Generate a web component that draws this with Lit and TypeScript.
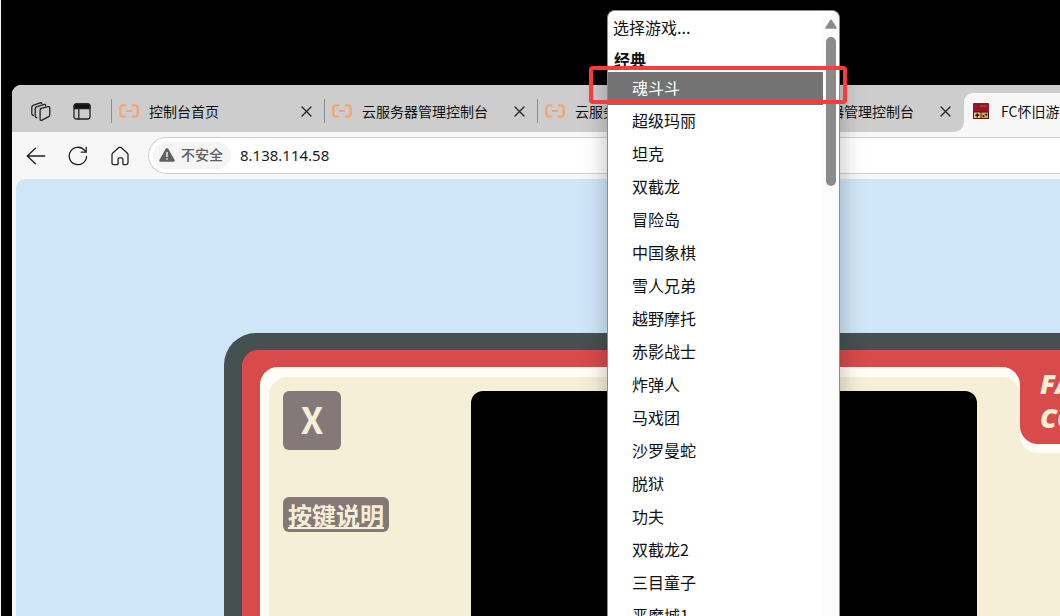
import { LitElement, html, css, svg, nothing } from "lit";
import { customElement, property, state } from "lit/decorators.js";

const cloudIcon = html`<svg width="20" height="14" viewBox="0 0 20 14" fill="none" stroke="#f2a671" aria-hidden="true">
  <path d="M7.2 1.3H4.2C2.4 1.3 1.3 2.5 1.3 4.2v5.6c0 1.700 1.100 2.900 2.900 2.900h3M12.800 1.300h3c1.800 0 2.900 1.200 2.900 2.900v5.600c0 1.700-1.100 2.900-2.900 2.900h-3" stroke-width="2.300" />
  <path d="M6.800 7h6.400" stroke-width="2" />
</svg>`;

const consoleIcon = html`<svg width="16" height="16" viewBox="0 0 16 16" aria-hidden="true">
  <rect width="16" height="16" rx="1" fill="#9a1626" />
  <path d="M7 2.600h7v1.200H7z" fill="#b5404a" />
  <path d="M0 8.500h16V15a1 1 0 0 1-1 1H1a1 1 0 0 1-1-1z" fill="#4a1512" />
  <rect x="1" y="9.500" width="6.500" height="5.500" fill="#f0c66e" />
  <rect x="8.500" y="9.500" width="6.500" height="5.500" fill="#d9a65a" />
  <path d="M3.600 10.200h1.400v1.400h1.300V13H5v1.400H3.600V13H2.300v-1.400h1.300z" fill="#2a0d0b" />
  <circle cx="10.500" cy="13" r="1.100" fill="#2a0d0b" />
  <circle cx="13.300" cy="11.600" r="1.100" fill="#2a0d0b" />
</svg>`;

const stroked = (w: number, h: number, shapes: unknown) => html`<svg
  width=${w} height=${h} viewBox="0 0 ${w} ${h}" fill="none" stroke="#222" stroke-width="1.300"
  stroke-linecap="round" stroke-linejoin="round" aria-hidden="true">${shapes}</svg>`;

const workspacesIcon = stroked(20, 20, svg`
  <path d="M9.200 6.600l7.700-1.900q1.900-.4 1.900 1.500v6.600q0 1.300-1.100 1.900l-6.600 3.400q-2 .9-2-1.100V8.500q0-1.500 1.100-1.900z" />
  <path d="M5.800 15.700l-.7-.1q-.9-.3-.9-1.500V6.800q0-1.500 1.300-2l7.600-2.400q1.200-.3 1.500.8v.6" />
  <path d="M2.400 13.500q-1.600-.3-1.600-1.900V5.200q0-1.400 1.300-1.900l7-2.400q1.300-.4 1.700.5" />`);
const verticalTabsIcon = stroked(18, 17, svg`
  <rect x="1" y="1" width="16" height="15" rx="2.500" />
  <path d="M1.200 4V3q0-2 2-2h11.600q2 0 2 2v2.500H1.200z" fill="#111" />
  <path d="M5.800 5.500V16" />`);
const backIcon = stroked(20, 18, svg`<path d="M9.500 1.200L1.200 9l8.300 7.800M1.200 9h17.600" />`);
const reloadIcon = stroked(20, 20, svg`<path d="M18.600 10.500A8.700 8.700 0 1 1 16.600 4.400L18.200 6.200M18.200 1.200v5h-5" />`);
const homeIcon = stroked(18, 20, svg`
  <path d="M1 8.600q0-1 .8-1.700l6-5.300q1.200-1 2.400 0l6 5.300q.8.700.8 1.700v8.200q0 1.800-1.700 1.800h-2.200q-1.200 0-1.200-1.200v-4.200q0-1.400-1.400-1.400H8.500q-1.400 0-1.400 1.400v4.200q0 1.200-1.200 1.200H2.700Q1 18.600 1 16.800z" />`);
const closeIcon = stroked(11, 11, svg`<path d="M1 1l9 9M10 1l-9 9" />`);
const warningIcon = html`<svg width="16" height="14" viewBox="0 0 16 14" aria-hidden="true">
  <path d="M6.800.8q1.200-1.400 2.400 0l6.300 11q.8 1.700-1 2H1.500q-1.800-.3-1-2z" fill="#606060" />
  <path d="M7.300 4h1.400v5H7.300zM7.300 10.300h1.400v1.400H7.300z" fill="#f5f5f5" />
</svg>`;

@customElement("browser-tab")
class BrowserTab extends LitElement {
  @property() label = "";
  @property() kind = "cloud";
  @property({ type: Boolean, reflect: true }) active = false;

  static styles = css`
    :host { flex: none; display: block; height: 47px; box-sizing: border-box; padding-top: 8px; }
    .tab {
      position: relative; display: flex; align-items: center; box-sizing: border-box;
      width: 213px; height: 39px; padding: 0 13px 3px 7px; gap: 10px;
    }
    .tab::before { content: ""; flex: none; width: 1px; height: 24px; margin-left: -8px; margin-right: -3px; background: #8c8c8c; }
    :host([active]) .tab { padding-left: 9px; background: #f7f7f7; border-radius: 9px 9px 0 0; gap: 12px; }
    :host([active]) .tab::before {
      position: absolute; left: -9px; bottom: 0; width: 9px; height: 9px; margin: 0;
      background: radial-gradient(circle at 0 0, transparent 8px, #f7f7f7 9px);
    }
    .label { flex: 1; white-space: nowrap; overflow: hidden; }
    .close { display: flex; padding: 0; border: 0; background: none; }
    svg { flex: none; display: block; }
  `;

  render() {
    return html`<div class="tab" role="tab" aria-selected=${this.active}>
      ${this.kind === "console" ? consoleIcon : cloudIcon}
      <span class="label">${this.label}</span>
      ${this.active ? nothing : html`<button class="close" aria-label="关闭">${closeIcon}</button>`}
    </div>`;
  }
}

@customElement("browser-toolbar")
class BrowserToolbar extends LitElement {
  static styles = css`
    :host { flex: none; display: flex; align-items: center; height: 47px; background: #f7f7f7; padding-left: 14px; }
    .tool { display: flex; justify-content: center; width: 20px; margin-right: 22px; padding: 0; border: 0; background: none; }
    .address {
      flex: 1; display: flex; align-items: center; gap: 9px; box-sizing: border-box; height: 37px;
      padding-left: 4px; margin-left: -4px; border: 1px solid #d2d0ce; border-right: 0;
      border-radius: 19px 0 0 19px; background: #fff;
    }
    .security {
      display: flex; align-items: center; gap: 6px; height: 27px; padding: 0 8px 2px 6px; border: 0;
      border-radius: 14px; background: #f5f5f5; color: #606060; font: 500 14px/25px "Noto Sans CJK SC", sans-serif;
    }
    .url { flex: 1; min-width: 0; padding: 0; border: 0; outline: 0; background: none; color: #1b1b1b; font: 15px/23px "Noto Sans", sans-serif; }
  `;

  render() {
    return html`
      <button class="tool" aria-label="后退">${backIcon}</button>
      <button class="tool" aria-label="刷新">${reloadIcon}</button>
      <button class="tool" aria-label="主页">${homeIcon}</button>
      <div class="address">
        <button class="security">${warningIcon}不安全</button>
        <input class="url" aria-label="地址" value="8.138.114.58" />
      </div>`;
  }
}

@customElement("game-console")
class GameConsole extends LitElement {
  static styles = css`
    :host { display: flex; flex: 1; min-height: 0; }
    .shell {
      flex: 1; display: flex; box-sizing: border-box; min-width: 0; padding: 17px 0 0 18px;
      background: #475050; border-radius: 32px 0 0 0;
    }
    .body { flex: 1; display: flex; min-width: 0; padding: 17px 0 0 18px; background: #d94a4a; border-radius: 16px 0 0 0; }
    .face {
      flex: 1; display: flex; justify-content: space-between; min-width: 0; padding: 24px 43px 0 23px;
      background: #fffdf5; border-radius: 18px 18px 0 0; position: relative; isolation: isolate;
      overflow: hidden;
    }
    .face::before {
      content: ""; position: absolute; z-index: -1; inset: 10px 0 0 9px;
      background: #f6efd8; border-radius: 18px 18px 0 0;
    }
    .keys { flex: none; width: 188px; display: flex; flex-direction: column; align-items: flex-start; gap: 47px; }
    .key, .help { background: #857878; color: #f6efd8; border: 0; border-radius: 6px; }
    .key { width: 58px; height: 59px; padding: 0 0 4px; font: 700 36px/55px "Noto Sans CJK SC", sans-serif; }
    .help { padding: 0 5px; font: 700 24px/35px "Noto Sans CJK SC", sans-serif; text-underline-offset: 2px; }
    .screen { flex: 1; background: #000; border-radius: 12px 12px 0 0; }
    .side { flex: none; width: 40px; background: #f6efd8; }
    .badge {
      height: 77px; padding-left: 20px; background: #d94a4a; border-radius: 0 0 0 18px; box-shadow: 0 9px 0 #fffdf5;
      color: #f6efd8; font: italic 800 27px/34px "Open Sans", sans-serif; overflow: hidden;
    }
  `;

  render() {
    return html`<div class="shell"><div class="body">
      <main class="face">
        <div class="keys">
          <button class="key">X</button>
          <a class="help" href="#keys">按键说明</a>
        </div>
        <div class="screen"></div>
      </main>
      <aside class="side"><div class="badge">FAMILY<br />COMPUTER</div></aside>
    </div></div>`;
  }
}

@customElement("game-picker")
class GamePicker extends LitElement {
  @state() private chosen = "魂斗斗";

  private games = [
    "魂斗斗", "超级玛丽", "坦克", "双截龙", "冒险岛", "中国象棋", "雪人兄弟", "越野摩托", "赤影战士",
    "炸弹人", "马戏团", "沙罗曼蛇", "脱狱", "功夫", "双截龙2", "三目童子", "恶魔城1",
  ];

  static styles = css`
    :host {
      display: flex; box-sizing: border-box; overflow: hidden; background: #fff;
      border: 1px solid #8c8c8c; border-bottom: 0; border-radius: 8px 8px 0 0;
      box-shadow: 0 6px 24px rgba(0, 0, 0, 0.28);
    }
    .list {
      appearance: none; flex: 1; min-width: 0; height: 100%; margin: 0; padding: 0; border: 0; outline: 0; border-radius: 0;
      overflow: hidden; background: #fff; color: #111; font: 16px/24px "Noto Sans CJK SC", sans-serif;
    }
    .hint, .game { box-sizing: border-box; height: 33px; min-height: 33px; padding: 4px 0 0 5px; }
    .group { padding: 3px 0 0 4px; margin: 0; font-weight: 700; }
    .game { padding: 3px 0 0 24px; margin-left: -4px; font-weight: 400; }
    .game::before { content: none; }
    .game:checked { color: #fff; background: #737373 linear-gradient(#737373, #737373); }
    .bar { flex: none; display: flex; flex-direction: column; align-items: center; gap: 8px; width: 16px; padding-top: 8px; background: #fcfcfc; }
    .up { width: 12px; height: 10px; display: block; }
    .thumb { width: 10px; height: 149px; border-radius: 5px; background: #8b8b8b; }
  `;

  private pick(e: Event) {
    this.chosen = (e.target as HTMLSelectElement).value;
  }

  render() {
    return html`
      <select class="list" size="18" aria-label="选择游戏" @change=${this.pick}>
        <option class="hint" value="">选择游戏...</option>
        <optgroup class="group" label="经典">
          ${this.games.map((g) => html`<option class="game" value=${g} ?selected=${g === this.chosen}>${g}</option>`)}
        </optgroup>
      </select>
      <div class="bar" aria-hidden="true">
        <svg class="up" viewBox="0 0 12 10"><path d="M6 1.200L11 9H1z" fill="#8b8b8b" stroke="#8b8b8b" stroke-width="1.500" stroke-linejoin="round" /></svg>
        <div class="thumb"></div>
      </div>`;
  }
}

@customElement("app-root")
class AppRoot extends LitElement {
  static styles = css`
    :host {
      position: relative; display: flex; flex-direction: column; box-sizing: border-box; height: 100vh;
      overflow: hidden; padding: 85px 0 0 11px; background: #000; border-left: 1px solid #f4f4f4;
      font: 14px/20px "Noto Sans CJK SC", sans-serif; color: #111;
    }
    .window { flex: 1; display: flex; flex-direction: column; min-height: 0; overflow: hidden; background: #f7f7f7; border-radius: 9px 0 0 0; }
    .tabs { flex: none; display: flex; height: 47px; overflow: hidden; background: #cdcdcd; }
    .lead { flex: none; display: flex; align-items: center; gap: 22px; box-sizing: border-box; width: 100px; padding: 6px 0 0 19px; }
    .lead button { display: flex; padding: 0; border: 0; background: none; }
    .page {
      flex: 1; display: flex; flex-direction: column; box-sizing: border-box; min-height: 0; overflow: hidden;
      margin-left: 4px; padding: 154px 0 0 208px; background: #cfe6f8; border-radius: 9px 0 0 0;
    }
    .menu { position: absolute; left: 606px; top: 10px; bottom: 0; width: 233px; }
    .marker { position: absolute; left: 588px; top: 66px; width: 258px; height: 38px; box-sizing: border-box; border: 4px solid #f93b3b; border-radius: 4px; pointer-events: none; }
  `;

  render() {
    return html`
      <div class="window">
        <div class="tabs" role="tablist">
          <div class="lead">
            <button aria-label="工作区">${workspacesIcon}</button>
            <button aria-label="标签页操作">${verticalTabsIcon}</button>
          </div>
          <browser-tab label="控制台首页"></browser-tab>
          <browser-tab label="云服务器管理控制台"></browser-tab>
          <browser-tab label="云服务器管理控制台"></browser-tab>
          <browser-tab label="云服务器管理控制台"></browser-tab>
          <browser-tab label="FC怀旧游戏" kind="console" active></browser-tab>
        </div>
        <browser-toolbar></browser-toolbar>
        <div class="page"><game-console></game-console></div>
      </div>
      <game-picker class="menu"></game-picker>
      <div class="marker"></div>`;
  }
}
